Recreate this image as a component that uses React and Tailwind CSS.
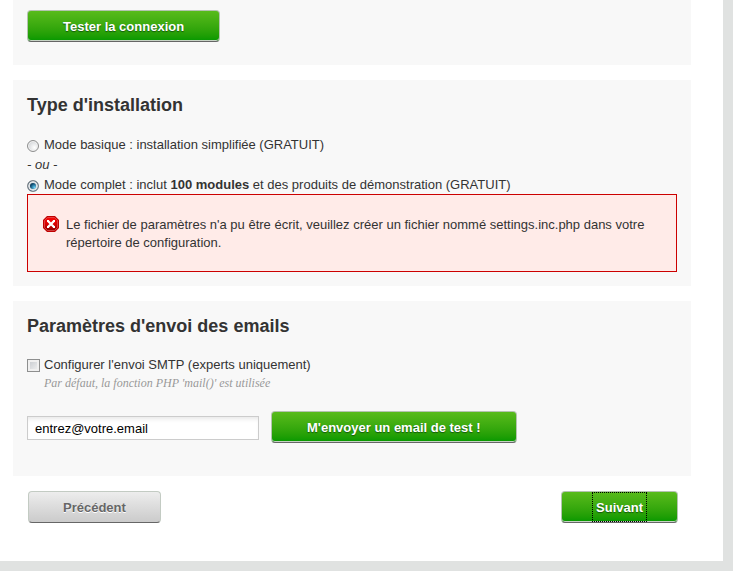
import { useState } from "react";

const buttonBase =
  "h-8 rounded border pt-0.5 text-[13px] leading-4 font-bold whitespace-nowrap";
const greenButton =
  "border-[#b5c3b1] border-b-[#666] bg-linear-to-b from-[#58bb1b] to-[#009800] text-white shadow-[inset_0_-1px_0_#c6d3c4] [text-shadow:0_1px_1px_#14590a]";
const grayButton =
  "border-[#c3cbc3] border-b-[#666] bg-linear-to-b from-[#ededed] to-[#cbcbcb] text-[#666] [text-shadow:0_1px_0_#fff]";

function Section({ title, children }) {
  return (
    <section className="bg-[#f8f8f8] p-3.5">
      <h2 className="mb-[18px] text-lg leading-[22px] font-bold">{title}</h2>
      {children}
    </section>
  );
}

function ModeOption({ id, checked, onSelect, children }) {
  return (
    <div className="flex items-center gap-[5px]">
      <input
        type="radio"
        name="mode"
        id={id}
        checked={checked}
        onChange={onSelect}
        className="mt-0.5 size-3 shrink-0 appearance-none rounded-full border border-[#8e8f8f] bg-radial-[at_65%_65%] from-white to-[#c4c8cc] inset-ring inset-ring-[#f2f2f2] checked:border-[#7a8288] checked:from-[#69d2f5] checked:via-[#12547c] checked:via-40% checked:to-[#0a2a42] checked:to-60% checked:inset-ring-2 checked:inset-ring-[#dfe3e6]"
      />
      <label htmlFor={id}>{children}</label>
    </div>
  );
}

function ErrorIcon() {
  return (
    <svg viewBox="0 0 16 16" className="size-4 shrink-0" aria-hidden="true">
      <defs>
        <linearGradient id="errorFill" x1="0" y1="0" x2="0" y2="1">
          <stop offset="0" stopColor="#fa0808" />
          <stop offset="0.5" stopColor="#d90000" />
          <stop offset="1" stopColor="#8c0000" />
        </linearGradient>
      </defs>
      <path d="M4 0h8l4 4v8l-4 4H4l-4-4V4z" fill="#c00000" />
      <path d="M4.5 1.5h7l3 3v7l-3 3h-7l-3-3v-7z" fill="url(#errorFill)" stroke="#e86a6a" strokeWidth="0.6" />
      <path d="M5 5l6 6M11 5l-6 6" stroke="#fff" strokeWidth="2.3" />
      <path d="M4 4h2v2H4zM10 4h2v2h-2zM4 10h2v2H4zM10 10h2v2h-2z" fill="#fff" />
    </svg>
  );
}

export default function App() {
  const [mode, setMode] = useState("full");
  const [smtp, setSmtp] = useState(false);
  const [email, setEmail] = useState("entrez@votre.email");

  return (
    <div className="min-h-screen bg-[#e0e2e1] pr-2.5 pb-2.5 font-['Liberation_Sans',Arial,sans-serif] text-[13px] leading-5 text-[#333]">
      <main className="bg-white pr-8 pb-[38px] pl-[13px]">
        <div className="flex flex-col gap-[15px]">
          <section className="bg-[#f8f8f8] px-3.5 pt-2.5 pb-[23px]">
            <button type="button" className={`${buttonBase} ${greenButton} block px-[35px]`}>
              Tester la connexion
            </button>
          </section>

          <Section title="Type d'installation">
            <div className="-mb-px pt-px">
              <ModeOption id="mode-basic" checked={mode === "basic"} onSelect={() => setMode("basic")}>
                Mode basique : installation simplifiée (GRATUIT)
              </ModeOption>
              <p className="italic">- ou -</p>
              <ModeOption id="mode-full" checked={mode === "full"} onSelect={() => setMode("full")}>
                Mode complet : inclut <strong>100 modules</strong> et des produits de démonstration (GRATUIT)
              </ModeOption>
            </div>
            <div role="alert" className="flex gap-[7px] border border-[#cc0000] bg-[#ffebe8] px-[15px] pt-[21px] pb-[19px] leading-[18px]">
              <ErrorIcon />
              <p>
                Le fichier de paramètres n'a pu être écrit, veuillez créer un fichier nommé settings.inc.php dans votre
                répertoire de configuration.
              </p>
            </div>
          </Section>

          <Section title="Paramètres d'envoi des emails">
            <div className="flex items-center gap-1">
              <input
                type="checkbox"
                id="smtp"
                checked={smtp}
                onChange={(e) => setSmtp(e.target.checked)}
                className="size-[13px] shrink-0 appearance-none border border-[#8e8f8f] bg-linear-to-br from-[#c3c7cc] to-[#f4f4f4] inset-ring-2 inset-ring-[#f0f0f0] checked:bg-[#12547c] checked:bg-none"
              />
              <label htmlFor="smtp">Configurer l'envoi SMTP (experts uniquement)</label>
            </div>
            <p className="ml-[17px] font-['Liberation_Serif',serif] text-xs leading-4 text-[#999] italic">
              Par défaut, la fonction PHP 'mail()' est utilisée
            </p>
            <div className="mt-5 mb-[19px] flex items-center gap-3">
              <input
                type="email"
                aria-label="Adresse email"
                value={email}
                onChange={(e) => setEmail(e.target.value)}
                className="mt-0.5 h-6 w-[232px] border border-[#ccc] bg-white px-[7px] text-black shadow-[inset_0_4px_4px_-2px_#e8e8e8] outline-none"
              />
              <button type="button" className={`${buttonBase} ${greenButton} px-[35px]`}>
                M'envoyer un email de test !
              </button>
            </div>
          </Section>
        </div>

        <div className="mt-[15px] flex justify-between pr-[13px] pl-[15px]">
          <button type="button" className={`${buttonBase} ${grayButton} px-[34px]`}>
            Précédent
          </button>
          <button type="button" className={`${buttonBase} ${greenButton} flex items-center px-[30px]`}>
            <span className="-mt-0.5 border border-dotted border-black px-[3px] pt-[7px] pb-[5px]">Suivant</span>
          </button>
        </div>
      </main>
    </div>
  );
}
